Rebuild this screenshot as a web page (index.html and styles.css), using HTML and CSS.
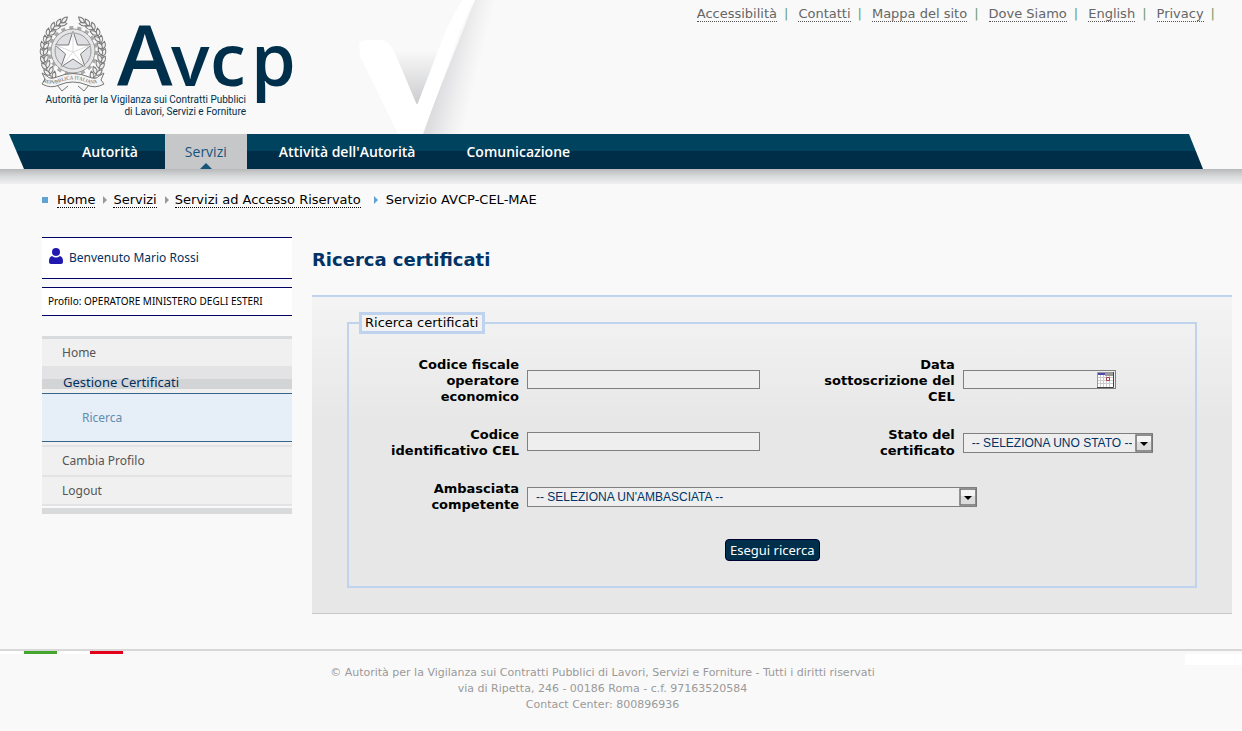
FILE: index.html
```
<!DOCTYPE html>
<html lang="it">
<head>
<meta charset="utf-8">
<title>Avcp - Ricerca certificati</title>
<link rel="stylesheet" href="styles.css">
</head>
<body>
<header class="header">
  <svg class="logo" width="262" height="134" viewBox="38 0 262 134" role="img" aria-label="Avcp">
    <defs>
      <path id="leaf" d="M0 0C-3 -2 -3 -5 0 -8C2 -5 2 -2 0 0Z"/>
      <g id="branch">
        <path fill="none" d="M62 84C40 75 38 48 50 32Q56 25 66 21"/>
        <use href="#leaf" transform="translate(58 82) rotate(-60)"/>
        <use href="#leaf" transform="translate(54 79) rotate(5)"/>
        <use href="#leaf" transform="translate(50 75) rotate(-50)"/>
        <use href="#leaf" transform="translate(50 74) rotate(20)"/>
        <use href="#leaf" transform="translate(47 69) rotate(-42)"/>
        <use href="#leaf" transform="translate(47 68) rotate(18)"/>
        <use href="#leaf" transform="translate(45 63) rotate(-32)"/>
        <use href="#leaf" transform="translate(45 62) rotate(22)"/>
        <use href="#leaf" transform="translate(44 56) rotate(-24)"/>
        <use href="#leaf" transform="translate(44 55) rotate(28)"/>
        <use href="#leaf" transform="translate(44 49) rotate(-18)"/>
        <use href="#leaf" transform="translate(44 49) rotate(38)"/>
        <use href="#leaf" transform="translate(46 43) rotate(-8)"/>
        <use href="#leaf" transform="translate(46 42) rotate(46)"/>
        <use href="#leaf" transform="translate(48 36) rotate(4)"/>
        <use href="#leaf" transform="translate(49 35) rotate(60)"/>
        <use href="#leaf" transform="translate(52 30) rotate(16)"/>
        <use href="#leaf" transform="translate(53 29) rotate(74)"/>
        <use href="#leaf" transform="translate(57 26) rotate(28)"/>
        <use href="#leaf" transform="translate(59 25) rotate(80)"/>
        <use href="#leaf" transform="translate(62 23) rotate(42)"/>
      </g>
      <path id="motto" d="M43 82Q52 86 60 82Q73 77 86 82Q95 86 104 79"/>
    </defs>
    <g class="wreath">
      <use href="#branch"/>
      <use href="#branch" transform="translate(146 0) scale(-1 1)"/>
    </g>
    <circle class="gear-teeth" cx="73" cy="51" r="23"/>
    <circle class="gear-body" cx="73" cy="51" r="22"/>
    <circle class="gear-hole" cx="73" cy="51" r="18"/>
    <path class="star" d="M73 31L77.500 45L91 45L80.500 54L85 67L73 59L61 67L65.500 54L55 45L68.500 45Z"/>
    <path class="star-lines" d="M73 31V52L91 45M73 52L85 67M73 52L61 67M73 52L55 45"/>
    <g class="wreath">
      <path class="ribbon" d="M42 73L47 76Q50 80 57 77Q73 70 89 77Q96 80 99 76L104 73L101 80L104 84Q95 89 87 85Q73 79 59 85Q51 89 42 84L45 79ZM57 85L62 91L68 86M89 85L84 91L78 86"/>
    </g>
    <text class="motto"><textPath href="#motto">REPVBBLICA ITALIANA</textPath></text>
    <text class="wordmark" x="117" y="86">A</text>
    <text class="wordmark-small" x="171" y="86">v</text>
    <text class="wordmark-small" x="210" y="86">c</text>
    <text class="wordmark-small" x="251" y="86">p</text>
    <text class="tagline" x="246" y="103">Autorità per la Vigilanza sui Contratti Pubblici</text>
    <text class="tagline" x="246" y="115">di Lavori, Servizi e Forniture</text>
  </svg>
  <svg class="tick" width="152" height="134" viewBox="359 0 152 134" aria-hidden="true">
    <defs>
      <linearGradient id="fade-down" x1="0" y1="50" x2="0" y2="104" gradientUnits="userSpaceOnUse"><stop offset="0" stop-color="#f9f9f9"/><stop offset="1" stop-color="#cbccce"/></linearGradient>
      <linearGradient id="fade-side" x1="438" y1="92" x2="471" y2="100" gradientUnits="userSpaceOnUse"><stop offset="0" stop-color="#dddde0"/><stop offset="0.6" stop-color="#f0f0f1"/><stop offset="1" stop-color="#f9f9f9"/></linearGradient>
    </defs>
    <path fill="url(#fade-down)" d="M393 50H439L417 106Z"/>
    <path fill="url(#fade-side)" d="M475 0H511V134H422Z"/>
    <path fill="#fff" d="M359 44Q359 40 369 40H381Q389 40 395 53L416 103Q417 105 418 103L436 56Q446 27 462 0H475Q463 20 455 45L423 134H398L360 56Z"/>
  </svg>
  <ul class="top-links">
    <li><a href="#">Accessibilità</a></li>
    <li><a href="#">Contatti</a></li>
    <li><a href="#">Mappa del sito</a></li>
    <li><a href="#">Dove Siamo</a></li>
    <li><a href="#">English</a></li>
    <li><a href="#">Privacy</a></li>
  </ul>
</header>
<div class="nav-band">
  <nav class="nav">
    <a href="#">Autorità</a>
    <a href="#" class="current">Servizi</a>
    <a href="#">Attività dell'Autorità</a>
    <a href="#">Comunicazione</a>
  </nav>
</div>
<div class="nav-shadow"></div>
<nav class="breadcrumb" aria-label="Percorso">
  <span class="square"></span>
  <a href="#">Home</a>
  <span class="caret"></span>
  <a href="#">Servizi</a>
  <span class="caret"></span>
  <a href="#">Servizi ad Accesso Riservato</a>
  <span class="caret caret-last"></span>
  <span>Servizio AVCP-CEL-MAE</span>
</nav>
<div class="columns">
  <aside class="sidebar">
    <div class="welcome">
      <svg width="14" height="16" viewBox="0 0 14 16" aria-hidden="true"><ellipse cx="7" cy="4" rx="4" ry="4" fill="#2118b0"/><path fill="#2118b0" d="M3 8Q7 11 11 8Q14 9 14 13V14Q14 16 12 16H2Q0 16 0 14V13Q0 9 3 8Z"/></svg>
      <span>Benvenuto Mario Rossi</span>
    </div>
    <div class="profile">Profilo: OPERATORE MINISTERO DEGLI ESTERI</div>
    <ul class="menu">
      <li><a href="#">Home</a></li>
      <li class="open"><a href="#">Gestione Certificati</a>
        <ul class="submenu"><li><a href="#">Ricerca</a></li></ul>
      </li>
      <li><a href="#">Cambia Profilo</a></li>
      <li><a href="#">Logout</a></li>
    </ul>
  </aside>
  <main class="main">
    <h1>Ricerca certificati</h1>
    <form class="panel">
      <fieldset>
        <legend>Ricerca certificati</legend>
        <div class="fields">
          <label for="cf">Codice fiscale operatore economico</label>
          <input class="text" id="cf" type="text">
          <label for="data">Data sottoscrizione del CEL</label>
          <div class="date">
            <input id="data" type="text">
            <button type="button" aria-label="Apri calendario">
              <svg width="17" height="16" viewBox="0 0 17 16" aria-hidden="true"><path fill="#fff" d="M0 0H17V16H0Z"/><path stroke="#ccc" d="M3.500 3V15M6.500 3V15M9.500 3V15M12.500 3V15M1 5.500H16M1 8.500H16M1 11.500H16"/><path fill="#999" d="M8 1H16V4H8Z"/><path fill="#4b4bb0" d="M1 1H8V3H1Z"/><path fill="#fff" stroke="#a33c48" d="M9.500 5.500H12.500V8.500H9.500Z"/><path fill="none" stroke="#444" d="M16.500 0V15.500H0"/><path fill="none" stroke="#999" d="M0.500 15V0.500H16"/></svg>
            </button>
          </div>
          <label for="cel">Codice identificativo CEL</label>
          <input class="text" id="cel" type="text">
          <label for="stato">Stato del certificato</label>
          <div class="select select-state">
            <select id="stato"><option>-- SELEZIONA UNO STATO --</option></select>
            <svg width="18" height="18" viewBox="0 0 18 18" aria-hidden="true"><path fill="#dcdcdc" stroke="#737373" stroke-width="1.500" d="M1 1H17V17H1Z"/><path fill="#f4f4f4" d="M2 2H16V8H2Z"/><path d="M5 8H13L9 12Z"/></svg>
          </div>
          <label for="amb">Ambasciata competente</label>
          <div class="select select-embassy">
            <select id="amb"><option>-- SELEZIONA UN'AMBASCIATA --</option></select>
            <svg width="18" height="18" viewBox="0 0 18 18" aria-hidden="true"><path fill="#dcdcdc" stroke="#737373" stroke-width="1.500" d="M1 1H17V17H1Z"/><path fill="#f4f4f4" d="M2 2H16V8H2Z"/><path d="M5 8H13L9 12Z"/></svg>
          </div>
        </div>
        <button class="submit" type="submit">Esegui ricerca</button>
      </fieldset>
    </form>
  </main>
</div>
<footer class="footer">
  <div class="strip"><div class="flag"><i></i><i class="green"></i><i></i><i class="red"></i></div></div>
  <span class="footer-patch"></span>
  <p>© Autorità per la Vigilanza sui Contratti Pubblici di Lavori, Servizi e Forniture - Tutti i diritti riservati<br>via di Ripetta, 246 - 00186 Roma - c.f. 97163520584<br>Contact Center: 800896936</p>
</footer>
</body>
</html>
```

FILE: styles.css
```
* { box-sizing: border-box; }
body {
  margin: 0;
  background: #f9f9f9;
  color: #000;
  font: 13px/16px "DejaVu Sans", Verdana, sans-serif;
}
ul { list-style: none; margin: 0; padding: 0; }
a { color: inherit; text-decoration: none; }

.header { display: flex; padding-left: 38px; }
.logo, .tick { flex: none; display: block; }
.logo { overflow: visible; }
.tick { margin-left: 59px; }
.gear-teeth { fill: none; stroke: #aaa; stroke-width: 4; stroke-dasharray: 4 4; }
.gear-body { fill: #e6e6e8; stroke: #999; stroke-width: 1; }
.gear-hole { fill: #dedfe2; stroke: #999; stroke-width: 1; }
.star { fill: #fff; stroke: #777; stroke-width: 1; }
.star-lines { fill: none; stroke: #ddd; stroke-width: 1; }
.wreath { fill: #eee; stroke: #777; stroke-width: 1; }
.ribbon { fill: #f4f4f4; }
.motto { font: 5px "Liberation Serif", serif; fill: #555; }
.wordmark { font: 600 84px "Open Sans", sans-serif; fill: #002f4b; }
.wordmark-small { font: 600 72px "Open Sans", sans-serif; fill: #002f4b; }
.tagline { font: 10px Roboto, sans-serif; fill: #002f4b; text-anchor: end; }

.top-links {
  flex: 1;
  display: flex;
  justify-content: flex-end;
  padding: 6px 27px 0 0;
  color: #666;
  white-space: nowrap;
}
.top-links li { margin-left: 10px; }
.top-links li::after { content: "|"; color: #6b9a6b; margin-left: 7px; }
.top-links a { border-bottom: 1px dotted #555; }

.nav-band { padding: 0 39px 0 9px; }
.nav {
  display: flex;
  height: 35px;
  padding-left: 53px;
  background: linear-gradient(#00435f 17px, #002d47 17px);
  clip-path: polygon(0 0, calc(100% - 14px) 0, 100% 100%, 15px 100%);
  font: 600 14px/35px "Open Sans", sans-serif;
  color: #fff;
}
.nav a { padding: 0 20px; margin-right: 11px; }
.nav a:first-child { margin-right: 7px; }
.nav .current { position: relative; margin-right: 12px; background: #c6c7c9; color: #17547a; font-weight: 400; }
.nav .current::after {
  content: "";
  position: absolute;
  left: 50%;
  bottom: 0;
  margin-left: -6px;
  border: 6px solid transparent;
  border-top: 0;
  border-bottom-color: #17547a;
}
.nav-shadow { height: 15px; background: linear-gradient(#b8b8ba, #d3d4d6 40%, #dedfe1 60%, #f0f0f1); }

.breadcrumb { display: flex; align-items: center; padding: 8px 42px 0; white-space: nowrap; }
.breadcrumb a { border-bottom: 1px dotted #000; line-height: 15px; }
.square { width: 6px; height: 6px; margin-right: 9px; background: #5ea3d3; }
.caret { margin: 0 6px 0 8px; border: 4px solid transparent; border-left-color: #999; border-right: 0; }
.caret-last { margin: 0 8px 0 13px; border-left-color: #5ea3d3; }

.columns { display: flex; gap: 20px; padding: 29px 10px 35px 42px; }
.sidebar { flex: 0 0 250px; font: 12px/20px "Noto Sans", sans-serif; }
.welcome {
  display: flex;
  gap: 6px;
  height: 42px;
  padding: 10px 7px;
  background: #fff;
  border: solid #000066;
  border-width: 1px 0;
  color: #003060;
}
.profile {
  margin-top: 8px;
  padding: 0 6px;
  background: #fff;
  border: solid #000066;
  border-width: 1px 0;
  font-size: 10px;
  line-height: 27px;
}
.menu {
  margin-top: 20px;
  border-top: 3px solid #d9dadb;
  border-bottom: 6px solid #d9dadb;
  padding-bottom: 2px;
  color: #555;
}
.menu a { display: block; }
.menu > li { background: #f0f0f0; border-bottom: 2px solid #e3e3e5; }
.menu > li > a { padding: 4px 20px; }
.menu > li:first-child { border-bottom: 0; }
.menu > li:first-child > a { padding-bottom: 3px; }
.menu > li:last-child > a { padding-bottom: 3px; }
.menu > .open { padding-bottom: 3px; }
.menu > .open > a {
  padding: 6px 20px 1px 21px;
  font-size: 13px;
  color: #003060;
  background: linear-gradient(#e3e3e5 13px, #d3d4d6 13px, #d3d4d6 23px, #f0f0f0 23px);
}
.submenu { background: #e6eef7; border: solid #36648b; border-width: 1px 0; color: #5f8db0; }
.submenu a { padding: 14px 40px 13px; }

.main { flex: 1; min-width: 0; }
h1 { margin: 11px 0 24px; font-size: 18px; line-height: 23px; color: #003366; }
.panel {
  padding: 15px 35px 25px;
  background: linear-gradient(#f4f4f4, #e7e7e7 125px);
  border-top: 2px solid #bfd3ee;
  border-bottom: 1px solid #c8c8c8;
}
fieldset { margin: 0; min-width: 0; padding: 23px 0 25px 34px; border: 2px solid #bfd3ee; }
legend { margin-left: -24px; padding: 0 4px 0 3px; border: 3px solid #bfd3ee; background: #f2f2f2; }
.fields { display: grid; grid-template-columns: 136px 11fr 136px 9fr; gap: 22px 8px; align-items: center; }
.fields label { text-align: right; font-weight: 700; }
.text, .date { height: 19px; margin-bottom: 3px; border: 1px solid #808080; background: #eee; }
.text { width: 233px; padding: 0 4px; }
.date { display: flex; align-items: center; width: 153px; }
.date input { flex: 1; min-width: 0; height: 17px; border: 0; padding: 0 4px; background: none; }
.date button { width: 17px; height: 16px; margin-right: 1px; padding: 0; border: 0; background: none; }
.date svg { display: block; }
.select { position: relative; height: 20px; }
.select select {
  appearance: none;
  display: block;
  width: 100%;
  height: 20px;
  padding: 0 20px 0 8px;
  border: 1px solid #808080;
  border-radius: 0;
  background: #eee;
  color: #003366;
  font: 12px/18px "Liberation Sans", Arial, sans-serif;
}
.select svg { position: absolute; top: 1px; right: 0; pointer-events: none; }
.select-state { width: 190px; }
.select-embassy { grid-column: 2 / -1; width: 450px; }
.submit {
  display: block;
  height: 22px;
  margin: 26px auto 0 342px;
  padding: 0 4px;
  border: 1px solid #000033;
  border-radius: 4px;
  background: #002f4b;
  color: #fff;
  font: 13px/18px "Noto Sans", sans-serif;
}

.footer { position: relative; padding-bottom: 16px; }
.strip { border-top: 2px solid #d8d8d9; }
.flag { display: flex; width: 123px; height: 3px; background: #fff; }
.flag i { width: 33px; }
.flag i:first-child { width: 24px; }
.flag .green { background: #45a72e; }
.flag .red { background: #e2001a; }
.footer-patch { position: absolute; top: 5px; right: 0; width: 57px; height: 11px; background: #fff; }
.footer p { margin: 11px 37px 0 0; text-align: center; font-size: 11px; line-height: 16px; color: #999; }
```
